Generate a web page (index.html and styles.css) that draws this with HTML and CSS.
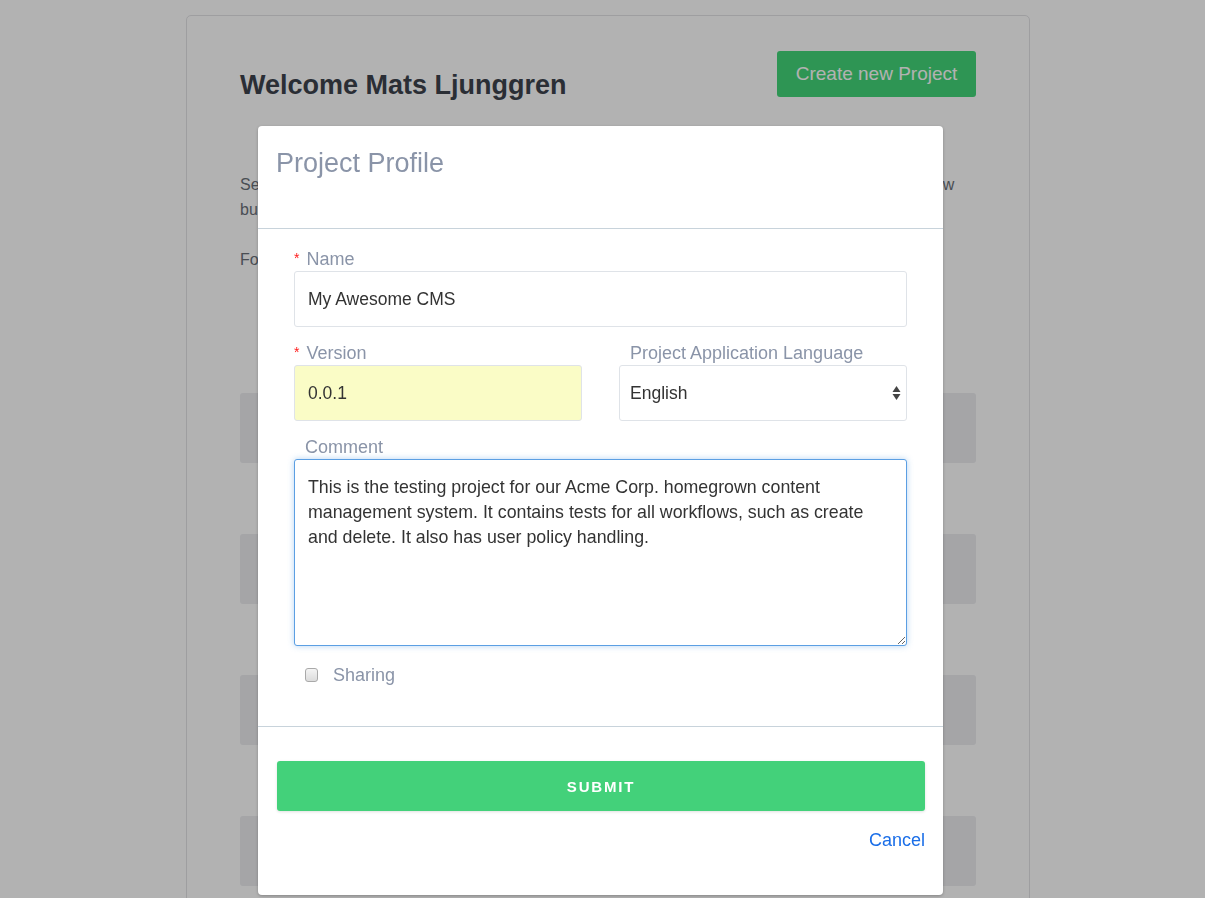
FILE: index.html
```html
<!DOCTYPE html>
<html>
<head>
<meta charset="utf-8">
<link rel="stylesheet" href="styles.css">
</head>
<body>
<div class="page">
  <div class="card">
    <div class="card-head">
      <h1 class="welcome">Welcome Mats Ljunggren</h1>
      <button class="create-btn">Create new Project</button>
    </div>
    <p class="intro">Select one of your projects below to see its tests and reports or use the button above to create a new<br>build project for your team.</p>
    <p class="intro">For more information, see the documentation.</p>
    <div class="rows">
      <div class="row"></div>
      <div class="row"></div>
      <div class="row"></div>
      <div class="row"></div>
    </div>
  </div>
</div>

<div class="overlay"></div>

<div class="modal">
  <div class="modal-header">
    <h2 class="modal-title">Project Profile</h2>
  </div>
  <div class="modal-body">
    <div class="field">
      <label class="label"><span class="req">*</span><span>Name</span></label>
      <input class="input" type="text" value="My Awesome CMS">
    </div>
    <div class="field-row">
      <div class="field">
        <label class="label"><span class="req">*</span><span>Version</span></label>
        <input class="input input-yellow" type="text" value="0.0.1">
      </div>
      <div class="field">
        <label class="label label-plain">Project Application Language</label>
        <div class="select-wrap">
          <select class="select">
            <option>English</option>
          </select>
          <svg class="select-arrows" width="9" height="16" viewBox="0 0 9 16">
            <path d="M4.5 1 L8.5 7 L0.5 7 Z" fill="#444"/>
            <path d="M4.5 15 L8.5 9 L0.5 9 Z" fill="#444"/>
          </svg>
        </div>
      </div>
    </div>
    <div class="field">
      <label class="label label-plain">Comment</label>
      <textarea class="textarea">This is the testing project for our Acme Corp. homegrown content management system. It contains tests for all workflows, such as create and delete. It also has user policy handling.</textarea>
    </div>
    <label class="check-row">
      <input class="checkbox" type="checkbox">
      <span>Sharing</span>
    </label>
  </div>
  <div class="modal-footer">
    <button class="submit-btn">SUBMIT</button>
    <div class="cancel-row"><a class="cancel" href="#">Cancel</a></div>
  </div>
</div>
</body>
</html>
```

FILE: styles.css
```css
* { box-sizing: border-box; }

html, body {
  margin: 0;
  padding: 0;
  height: 100%;
  overflow: hidden;
}

body {
  background: #ffffff;
  font-family: "Liberation Sans", Arial, sans-serif;
  color: #333;
}

.page {
  padding: 15px 0 0 186px;
}

.card {
  width: 844px;
  min-height: 920px;
  border: 1px solid #e3e3e6;
  border-radius: 5px;
  background: #fff;
  padding: 35px 53px 0 53px;
}

.card-head {
  display: flex;
  justify-content: space-between;
  align-items: flex-start;
}

.welcome {
  margin: 19px 0 0 0;
  font-size: 27px;
  line-height: 30px;
  font-weight: bold;
  color: #3d434d;
}

.create-btn {
  width: 199px;
  height: 46px;
  background: #43d679;
  color: #fff;
  border: none;
  border-radius: 3px;
  font-family: "Liberation Sans", Arial, sans-serif;
  font-size: 19px;
  cursor: pointer;
}

.intro {
  margin: 0 0 25px 0;
  font-size: 16px;
  line-height: 25px;
  color: #6a7079;
  white-space: nowrap;
}
.card-head + .intro { margin-top: 72px; }

.rows {
  margin-top: 121px;
  display: flex;
  flex-direction: column;
  gap: 71px;
}

.row {
  height: 70px;
  background: #ecedf0;
  border-radius: 3px;
}

.overlay {
  position: fixed;
  inset: 0;
  background: rgba(0, 0, 0, 0.3);
}

.modal {
  position: absolute;
  top: 126px;
  left: 258px;
  width: 685px;
  height: 769px;
  background: #fff;
  border-radius: 4px;
  box-shadow: 0 1px 3px rgba(0,0,0,0.25);
}

.modal-header {
  height: 103px;
  padding: 21px 18px 0 18px;
  border-bottom: 1px solid #c8d3db;
}

.modal-title {
  margin: 0;
  font-size: 27px;
  line-height: 32px;
  font-weight: normal;
  color: #8a94a8;
}

.modal-body {
  height: 498px;
  padding: 20px 36px 0 36px;
  border-bottom: 1px solid #c8d3db;
}

.field {
  display: flex;
  flex-direction: column;
  margin-bottom: 16px;
}

.field-row {
  display: grid;
  grid-template-columns: 288px 288px;
  column-gap: 37px;
}

.label {
  display: flex;
  align-items: flex-start;
  gap: 7px;
  height: 20px;
  font-size: 18px;
  line-height: 20px;
  color: #8a94a8;
  margin-bottom: 2px;
  white-space: nowrap;
}

.label-plain { display: block; padding-left: 11px; }

.req {
  color: #ff1a1a;
  font-size: 14px;
  line-height: 14px;
  margin-top: 2px;
}

.input {
  height: 56px;
  border: 1px solid #dfe3e8;
  border-radius: 3px;
  padding: 0 13px;
  font-family: "Liberation Sans", Arial, sans-serif;
  font-size: 17.5px;
  color: #333;
  background: #fff;
  outline: none;
}

.input-yellow { background: #fafcc6; }

.select-wrap {
  position: relative;
}

.select {
  width: 100%;
  height: 56px;
  border: 1px solid #dfe3e8;
  border-radius: 3px;
  padding: 0 10px;
  font-family: "Liberation Sans", Arial, sans-serif;
  font-size: 17.5px;
  color: #333;
  background: #fff;
  appearance: none;
  -webkit-appearance: none;
  outline: none;
}

.select-arrows {
  position: absolute;
  right: 6px;
  top: 20px;
  pointer-events: none;
}

.textarea {
  height: 187px;
  border: 1px solid #5b9fe3;
  border-radius: 3px;
  box-shadow: 0 0 6px rgba(91, 159, 227, 0.45);
  padding: 15px 16px 15px 13px;
  font-family: "Liberation Sans", Arial, sans-serif;
  font-size: 17.8px;
  line-height: 25px;
  color: #333;
  outline: none;
  resize: vertical;
}

.check-row {
  display: flex;
  align-items: center;
  gap: 15px;
  padding-left: 11px;
  margin-top: 19px;
  height: 20px;
  font-size: 18px;
  line-height: 20px;
  color: #8a94a8;
}

.checkbox {
  appearance: none;
  -webkit-appearance: none;
  width: 13px;
  height: 14px;
  margin: 0;
  border: 1px solid #a9a9a9;
  border-radius: 3px;
  background: linear-gradient(#f4f4f4, #dcdcdc);
}

.modal-footer {
  padding: 34px 18px 0 19px;
}

.submit-btn {
  width: 100%;
  height: 50px;
  background: #43d17a;
  border: none;
  border-radius: 3px;
  box-shadow: 0 1px 3px rgba(0,0,0,0.12);
  color: #fff;
  font-family: "Liberation Sans", Arial, sans-serif;
  font-weight: bold;
  font-size: 15px;
  letter-spacing: 1.8px;
  cursor: pointer;
}

.cancel-row {
  display: flex;
  justify-content: flex-end;
  margin-top: 19px;
}

.cancel {
  font-size: 18px;
  line-height: 20px;
  color: #1a6ee8;
  text-decoration: none;
}
```
